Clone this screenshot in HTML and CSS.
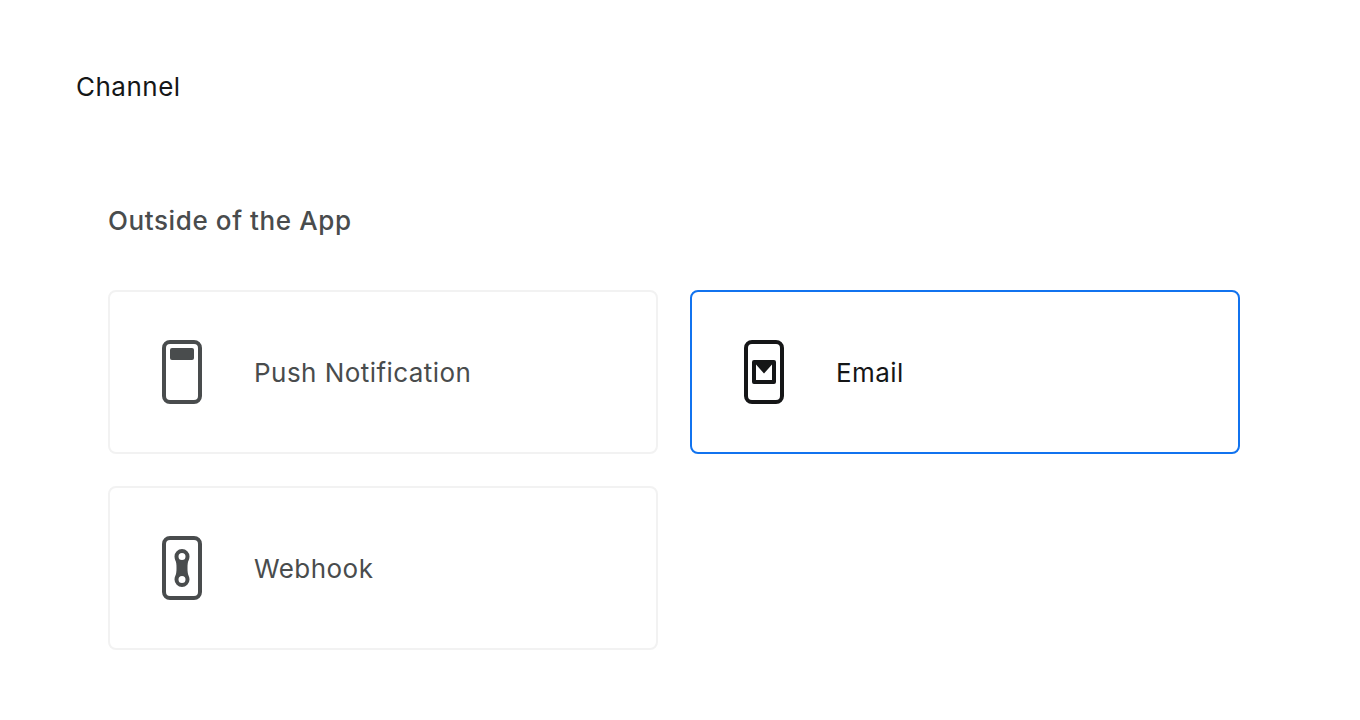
FILE: index.html
```html
<!DOCTYPE html>
<html lang="en">
<head>
    <meta charset="UTF-8">
    <meta name="viewport" content="width=device-width, initial-scale=1.0">
    <title>Channel</title>
    <link rel="stylesheet" href="styles.css">
</head>
<body>
    <h1 class="page-title">Channel</h1>
    <section class="channel-section">
        <h2 class="section-title">Outside of the App</h2>
        <div class="channel-grid">
            <div class="channel-card">
                <svg class="channel-icon" viewBox="0 0 40 64" width="40" height="64" fill="none">
                    <rect x="2" y="2" width="36" height="60" rx="6" stroke="currentColor" stroke-width="4"/>
                    <rect x="8" y="8" width="24" height="12" rx="2" fill="currentColor"/>
                </svg>
                <span class="channel-name">Push Notification</span>
            </div>
            <div class="channel-card selected">
                <svg class="channel-icon" viewBox="0 0 40 64" width="40" height="64" fill="none">
                    <rect x="2" y="2" width="36" height="60" rx="6" stroke="currentColor" stroke-width="4"/>
                    <path fill-rule="evenodd" fill="currentColor" d="M10 20h20a2 2 0 0 1 2 2v20a2 2 0 0 1-2 2h-20a2 2 0 0 1-2-2v-20a2 2 0 0 1 2-2zM12 24.500v15.500h16v-15.500l-8 9z"/>
                </svg>
                <span class="channel-name">Email</span>
            </div>
            <div class="channel-card">
                <svg class="channel-icon" viewBox="0 0 40 64" width="40" height="64" fill="none">
                    <rect x="2" y="2" width="36" height="60" rx="6" stroke="currentColor" stroke-width="4"/>
                    <path fill-rule="evenodd" fill="currentColor" d="M20 13a7.500 7.500 0 0 1 7.500 7.500c0 3-1.500 4.500-1.700 6.500-.3 1.700-.3 3.300-.3 5s0 3.300.3 5c.2 2 1.700 3.500 1.700 6.500a7.500 7.500 0 0 1-15 0c0-3 1.500-4.500 1.700-6.500.3-1.700.3-3.300.3-5s0-3.300-.3-5c-.2-2-1.700-3.500-1.700-6.500a7.500 7.500 0 0 1 7.500-7.500zm0 4a3.500 3.500 0 1 0 0 7 3.500 3.500 0 0 0 0-7zm0 23a3.500 3.500 0 1 0 0 7 3.500 3.500 0 0 0 0-7z"/>
                </svg>
                <span class="channel-name">Webhook</span>
            </div>
        </div>
    </section>
</body>
</html>
```

FILE: styles.css
```css
body {
    font-family: Inter, "Noto Sans", sans-serif;
    margin: 0;
    padding: 72px 76px 0;
    background-color: #fff;
    color: #494c4d;
}
.page-title {
    margin: 0;
    font-size: 26px;
    line-height: 30px;
    font-weight: 400;
    letter-spacing: 0.5px;
    color: #151617;
}
.channel-section {
    margin-top: 103px;
    padding-left: 32px;
}
.section-title {
    margin: 0 0 53px;
    font-size: 26px;
    line-height: 32px;
    font-weight: 500;
    letter-spacing: 0.6px;
}
.channel-grid {
    display: grid;
    grid-template-columns: 550px 550px;
    grid-auto-rows: 164px;
    gap: 32px;
}
.channel-card {
    box-sizing: border-box;
    display: flex;
    align-items: center;
    gap: 52px;
    padding-left: 52px;
    background-color: #fff;
    border: 2px solid #f2f2f2;
    border-radius: 8px;
}
.channel-card.selected {
    border-color: #1173ef;
    color: #151617;
}
.channel-icon {
    flex-shrink: 0;
}
.channel-name {
    margin-top: 2px;
    font-size: 26px;
    line-height: 36px;
    letter-spacing: 0.45px;
}
```
